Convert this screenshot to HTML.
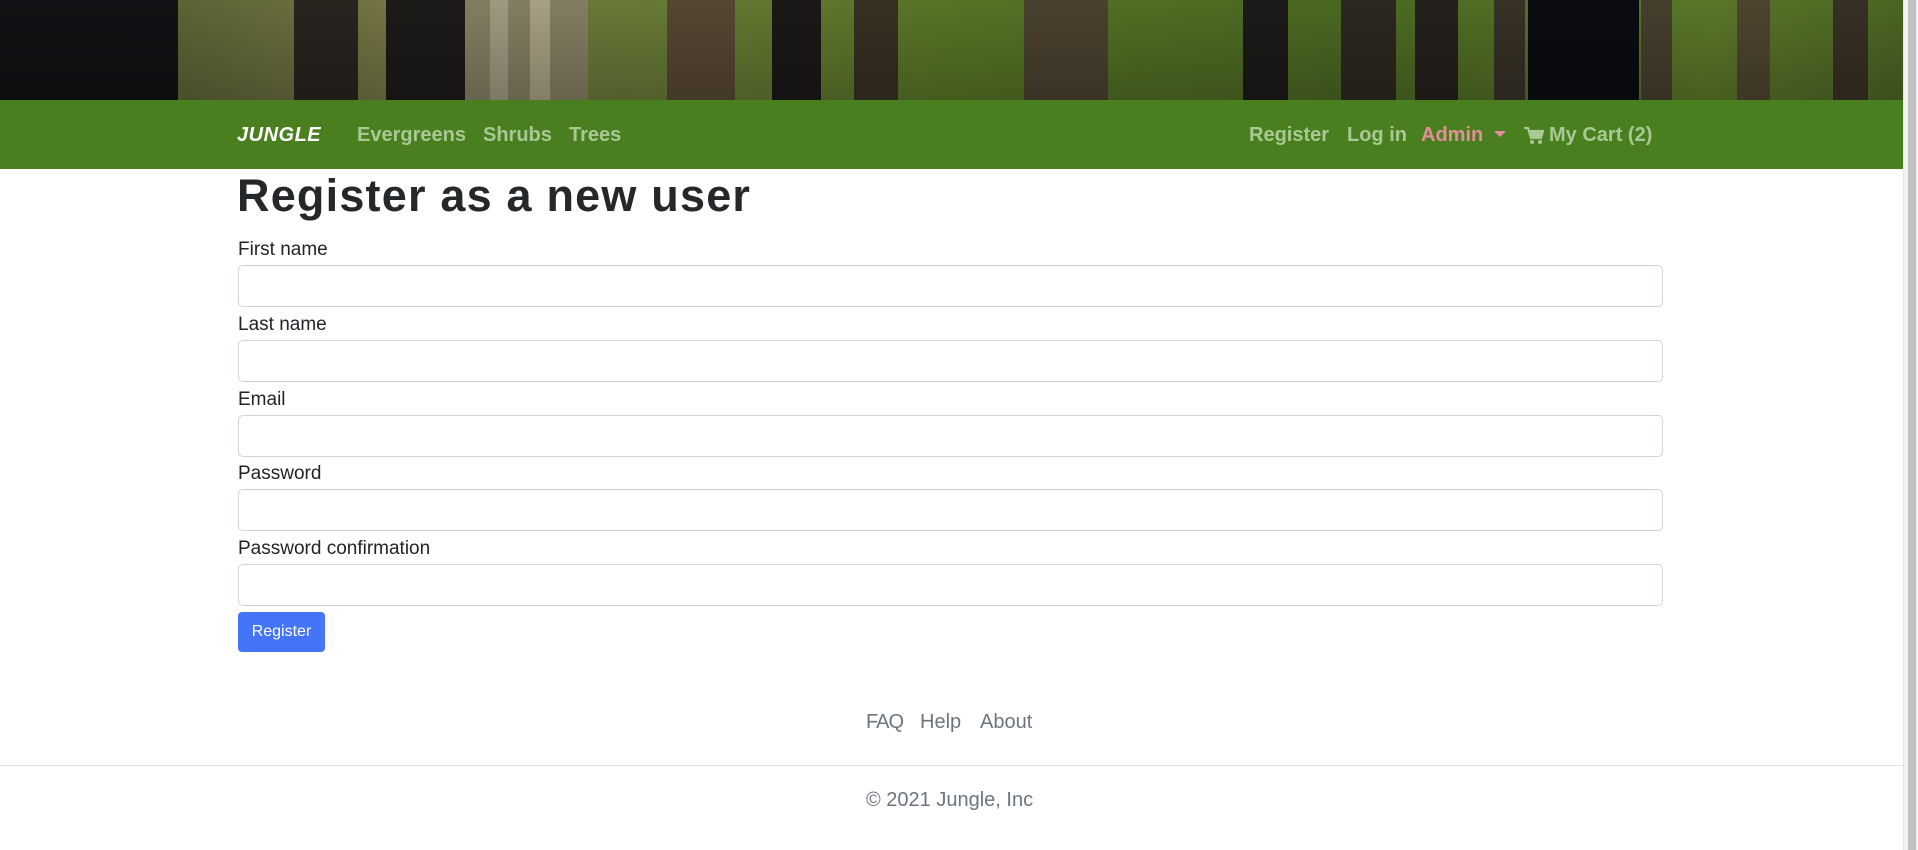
<!DOCTYPE html>
<html><head><meta charset="utf-8"><style>
*{box-sizing:border-box;margin:0;padding:0}
html,body{width:1918px;height:850px;overflow:hidden;background:#fff;font-family:"Liberation Sans",sans-serif;color:#212529}
.banner{position:absolute;left:0;top:0;width:1903px;height:100px;background:linear-gradient(90deg,#4a5a28 0%,#7a7a48 20%,#6c8038 35%,#5a7a28 50%,#4e6d24 70%,#5f7d2c 90%,#4e6a25 100%);overflow:hidden}
.banner div{position:absolute;top:0;height:100px}
.banner:after{content:"";position:absolute;inset:0;background:linear-gradient(180deg,rgba(0,0,0,0.05),rgba(0,0,0,0.25))}
.nav{position:absolute;left:0;top:100px;width:1903px;height:69px;background:#497f1e}
.nav span{position:absolute;top:24px;font-size:20px;font-weight:bold;color:#a8c994}
.scroll{position:absolute;left:1903px;top:0;width:15px;height:850px;background:#f1f1f1;border-left:1px solid #e4e4e4}
.scroll div{position:absolute;left:4px;top:0;width:8px;height:850px;background:#c1c1c1}
h1{position:absolute;left:237px;top:170px;font-size:45px;font-weight:bold;color:#25282b;letter-spacing:1.2px}
label{position:absolute;left:238px;font-size:19px;color:#212529}
.inp{position:absolute;left:238px;width:1425px;height:42px;border:1px solid #ced4da;border-radius:5px}
.btn{position:absolute;left:238px;top:612px;width:87px;height:40px;background:#4474f8;border-radius:4px;color:#fff;font-size:16px;text-align:center;line-height:40px}
.foot{position:absolute;font-size:20px;color:#6c757d}
</style></head><body>
<div class="banner">
<div style="left:0;width:178px;background:#121316"></div>
<div style="left:294px;width:64px;background:#2a2620"></div>
<div style="left:386px;width:86px;background:#1e1c1a"></div>
<div style="left:465px;width:123px;background:#8a8466"></div>
<div style="left:490px;width:18px;background:#a8a088"></div>
<div style="left:530px;width:20px;background:#b0a88a"></div>
<div style="left:667px;width:68px;background:#5a4a35"></div>
<div style="left:772px;width:49px;background:#1c1a18"></div>
<div style="left:854px;width:44px;background:#3a3224"></div>
<div style="left:1024px;width:84px;background:#4e4432"></div>
<div style="left:1243px;width:45px;background:#1e1c1a"></div>
<div style="left:1341px;width:55px;background:#2e2a22"></div>
<div style="left:1415px;width:43px;background:#262220"></div>
<div style="left:1494px;width:31px;background:#3a3428"></div>
<div style="left:1528px;width:111px;background:#0c0d12"></div>
<div style="left:1641px;width:31px;background:#4a4230"></div>
<div style="left:1737px;width:33px;background:#524832"></div>
<div style="left:1833px;width:35px;background:#3a3226"></div>
</div>
<div class="nav">
<span style="left:237px;color:#fff;font-style:italic;font-weight:900;letter-spacing:0.5px">JUNGLE</span>
<span style="left:357px">Evergreens</span>
<span style="left:483px">Shrubs</span>
<span style="left:569px">Trees</span>
<span style="left:1249px">Register</span>
<span style="left:1347px">Log in</span>
<span style="left:1421px;color:#e58d9c">Admin</span>
<span style="left:1494px;top:31px;width:0;height:0;border-left:6px solid transparent;border-right:6px solid transparent;border-top:6px solid #e58d9c"></span>
<span style="left:1524px;top:27px"><svg width="20" height="18" viewBox="0 0 20 18"><path d="M0 1h4l3 10h10l2-7H5" fill="none" stroke="#a8c994" stroke-width="2.2"/><path d="M5 4h14l-2 7H7z" fill="#a8c994"/><circle cx="8" cy="15" r="2" fill="#a8c994"/><circle cx="16" cy="15" r="2" fill="#a8c994"/></svg></span>
<span style="left:1549px">My Cart (2)</span>
</div>
<h1>Register as a new user</h1>
<label style="top:239px">First name</label><div class="inp" style="top:265px"></div>
<label style="top:314px">Last name</label><div class="inp" style="top:340px"></div>
<label style="top:389px">Email</label><div class="inp" style="top:415px"></div>
<label style="top:463px">Password</label><div class="inp" style="top:489px"></div>
<label style="top:538px">Password confirmation</label><div class="inp" style="top:564px"></div>
<div class="btn">Register</div>
<div class="foot" style="left:866px;top:711px;letter-spacing:-1px">FAQ</div>
<div class="foot" style="left:920px;top:711px">Help</div>
<div class="foot" style="left:980px;top:711px">About</div>
<div style="position:absolute;left:0;top:765px;width:1903px;height:1px;background:#dee2e6"></div>
<div class="foot" style="left:866px;top:789px">© 2021 Jungle, Inc</div>
<div class="scroll"><div></div></div>
</body></html>
